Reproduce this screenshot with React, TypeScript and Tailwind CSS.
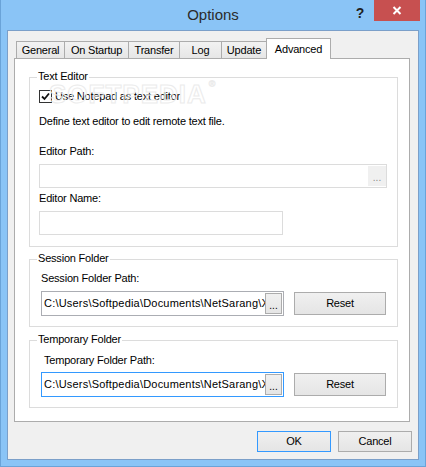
import React from "react";

function Tab({ label, w, selected, last }: { label: string; w: number; selected?: boolean; last?: boolean }) {
  if (selected) {
    return (
      <div
        className="relative z-10 -mb-px flex h-[21px] items-center justify-center border-l border-r border-t border-[#acacac] bg-white"
        style={{ width: w }}
      >
        <span className="leading-[13px]">{label}</span>
      </div>
    );
  }
  return (
    <div
      className={`flex h-[17px] items-center justify-center border-l border-t border-[#acacac] bg-gradient-to-b from-[#f2f2f2] to-[#e6e6e6] ${last ? "border-r" : ""}`}
      style={{ width: w }}
    >
      <span className="leading-[13px]">{label}</span>
    </div>
  );
}

function Group({ title, className, children }: { title: string; className: string; children: React.ReactNode }) {
  return (
    <div className={`relative ml-[14px] w-[369px] border border-[#dcdcdc] ${className}`}>
      <span className="absolute -top-[8px] left-[7px] bg-white px-[1px] leading-[13px]">{title}</span>
      {children}
    </div>
  );
}

function WinButton({ label, w, h, focused }: { label: string; w: number; h: number; focused?: boolean }) {
  return (
    <div
      className={`flex items-center justify-center border bg-gradient-to-b from-[#f0f0f0] to-[#e5e5e5] ${focused ? "border-[#3399ff]" : "border-[#acacac]"}`}
      style={{ width: w, height: h }}
    >
      <span className="leading-[13px]">{label}</span>
    </div>
  );
}

function PathInput({ value, focused }: { value: string; focused?: boolean }) {
  return (
    <div
      className={`flex h-[25px] w-[243px] items-center border bg-white pr-[1px] ${focused ? "border-[#3399ff]" : "border-[#abadb3]"}`}
    >
      <div className="min-w-0 flex-1 overflow-hidden whitespace-nowrap pl-[2px] leading-[13px] tracking-[0.2px]">{value}</div>
      <div className="flex h-[21px] w-[17px] items-end justify-center border border-[#acacac] bg-gradient-to-b from-[#f0f0f0] to-[#e5e5e5] pb-[2px] text-[10px] leading-[10px] tracking-[0px]">
        ...
      </div>
    </div>
  );
}

export default function App() {
  return (
    <div className="relative flex h-[467px] w-[426px] flex-col border-b border-l border-r border-[#6aa3d8] bg-[#8ac4f6] font-['Liberation_Sans',Arial,sans-serif] text-[11px] tracking-[-0.2px] text-black">
      {/* Title bar */}
      <div className="relative flex h-[30px] items-center justify-center">
        <span className="text-[15px] tracking-[0px] text-[#2b2b2b] leading-[18px]">Options</span>
        <span className="absolute right-[61px] top-[5px] text-[14px] font-bold leading-[16px] text-[#1e1e1e]">?</span>
        <div className="absolute right-[5px] top-0 flex h-[21px] w-[46px] items-center justify-center bg-[#c75050]">
          <svg width="10" height="9" viewBox="0 0 10 9">
            <path d="M1.5 1 L8.5 8 M8.5 1 L1.5 8" stroke="white" strokeWidth="2" fill="none" />
          </svg>
        </div>
      </div>

      {/* Client area */}
      <div className="ml-[6px] flex h-[430px] w-[412px] flex-col border border-[#7b9fc9] bg-[#f0f0f0]">
        {/* Tabs */}
        <div className="ml-[8px] mt-[7px] flex h-[20px] items-end">
          <Tab label="General" w={48} />
          <Tab label="On Startup" w={64} />
          <Tab label="Transfer" w={51} />
          <Tab label="Log" w={42} />
          <Tab label="Update" w={45} />
          <Tab label="Advanced" w={65} selected />
        </div>

        {/* Panel */}
        <div className="relative ml-[6px] flex h-[364px] w-[396px] flex-col border border-[#acacac] bg-white">
          <Group title="Text Editor" className="mt-[18px] h-[170px]">
            <div className="flex flex-col pl-[9px] pt-[12px]">
              <div className="flex h-[13px] items-center gap-[3px]">
                <div className="flex h-[13px] w-[13px] items-center justify-center border border-[#333333] bg-white">
                  <svg width="9" height="9" viewBox="0 0 9 9">
                    <path d="M1 4.5 L3.5 7 L8 1.5" stroke="#111" strokeWidth="1.8" fill="none" />
                  </svg>
                </div>
                <span className="leading-[13px]">Use Notepad as text editor</span>
              </div>
              <div className="mt-[12px] leading-[13px]">Define text editor to edit remote text file.</div>
              <div className="mt-[17px] leading-[13px]">Editor Path:</div>
              <div className="mt-[6px] flex h-[24px] w-[348px] items-center justify-end border border-[#dcdcdc] bg-white">
                <div className="flex h-[20px] w-[18px] items-end justify-center bg-[#f0f0f0] pb-[3px] text-[10px] leading-[10px] tracking-[0px] text-[#8a8a8a]">
                  ...
                </div>
              </div>
              <div className="mt-[4px] leading-[13px]">Editor Name:</div>
              <div className="mt-[6px] h-[24px] w-[244px] border border-[#dcdcdc] bg-white" />
            </div>
          </Group>

          <Group title="Session Folder" className="mt-[12px] h-[68px]">
            <div className="flex flex-col pl-[11px] pt-[12px]">
              <div className="leading-[13px]">Session Folder Path:</div>
              <div className="mt-[6px] flex items-center gap-[10px]">
                <PathInput value={"C:\\Users\\Softpedia\\Documents\\NetSarang\\Xftp\\Sessions"} />
                <WinButton label="Reset" w={92} h={23} />
              </div>
            </div>
          </Group>

          <Group title="Temporary Folder" className="mt-[13px] h-[68px]">
            <div className="flex flex-col pl-[11px] pt-[13px]">
              <div className="ml-[3px] leading-[13px]">Temporary Folder Path:</div>
              <div className="mt-[5px] flex items-center gap-[10px]">
                <PathInput value={"C:\\Users\\Softpedia\\Documents\\NetSarang\\Xftp\\Temp"} focused />
                <WinButton label="Reset" w={92} h={23} />
              </div>
            </div>
          </Group>

          {/* watermark overlay */}
          <div className="pointer-events-none absolute left-[34px] top-[20px] text-[26px] font-bold leading-[30px] tracking-[1px] text-transparent [-webkit-text-stroke:1px_#ebebeb]">
            SOFTPEDIA
            <span className="ml-[2px] align-top text-[9px] leading-[10px] tracking-[0px] [-webkit-text-stroke:0.6px_#ebebeb]">®</span>
          </div>
        </div>

        {/* Bottom buttons */}
        <div className="mt-[9px] flex justify-end gap-[7px] pr-[6px]">
          <WinButton label="OK" w={74} h={21} focused />
          <WinButton label="Cancel" w={74} h={21} />
        </div>
      </div>
    </div>
  );
}
